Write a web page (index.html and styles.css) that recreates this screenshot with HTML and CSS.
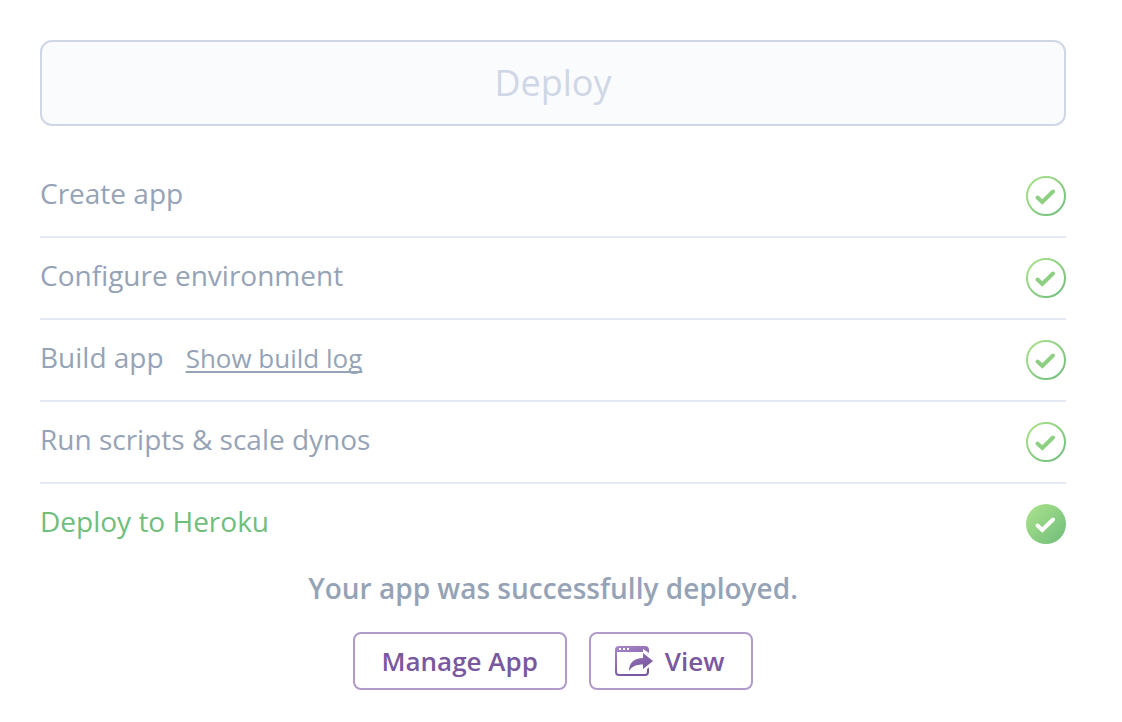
FILE: index.html
```html
<!DOCTYPE html>
<html lang="en">
<head>
<meta charset="utf-8">
<title>Deploy</title>
<link rel="stylesheet" href="styles.css">
</head>
<body>
<svg class="defs" width="0" height="0" aria-hidden="true">
  <defs>
    <linearGradient id="green" x1="0" y1="0" x2="1" y2="1">
      <stop offset="0" stop-color="#ace48c"/>
      <stop offset="1" stop-color="#6fbc7b"/>
    </linearGradient>
    <linearGradient id="purple" gradientUnits="userSpaceOnUse" x1="0" y1="0" x2="12" y2="30">
      <stop offset="0" stop-color="#a987ca"/>
      <stop offset="1" stop-color="#79589f"/>
    </linearGradient>
    <symbol id="check" viewBox="0 0 40 40">
      <circle cx="20" cy="20" r="19" fill="none" stroke="url(#green)" stroke-width="2"/>
      <path d="M11.5 21.5 16.3 26 27 15.5" fill="none" stroke="#8ed082" stroke-width="4" stroke-linecap="round" stroke-linejoin="miter"/>
    </symbol>
    <symbol id="check-full" viewBox="0 0 40 40">
      <circle cx="20" cy="20" r="20" fill="url(#green)"/>
      <path d="M11.5 21.5 16.3 26 27 15.5" fill="none" stroke="#fff" stroke-width="4" stroke-linecap="round" stroke-linejoin="miter"/>
    </symbol>
  </defs>
</svg>
<main class="page">
  <button class="deploy" type="button" disabled>Deploy</button>
  <ul class="steps">
    <li class="step"><span>Create app</span><svg class="status"><use href="#check"/></svg></li>
    <li class="step"><span>Configure environment</span><svg class="status"><use href="#check"/></svg></li>
    <li class="step"><span>Build app</span><a class="log" href="#log">Show build log</a><svg class="status"><use href="#check"/></svg></li>
    <li class="step"><span>Run scripts &amp; scale dynos</span><svg class="status"><use href="#check"/></svg></li>
    <li class="step current"><span>Deploy to Heroku</span><svg class="status"><use href="#check-full"/></svg></li>
  </ul>
  <p class="message">Your app was successfully deployed.</p>
  <div class="actions">
    <button class="action" type="button">Manage App</button>
    <button class="action view" type="button">
      <svg class="view-icon" viewBox="0 0 38 30" aria-hidden="true">
        <path fill="url(#purple)" fill-rule="evenodd" d="M4 0H30Q34 0 34 4V7L28 3V6H2V26Q2 28 4 28H30Q32 28 32 26V23L34 21.500V26Q34 30 30 30H4Q0 30 0 26V4Q0 0 4 0ZM4 2V4H6V2ZM8 2V4H10V2ZM12 2V4H14V2Z"/>
        <path fill="url(#purple)" d="M28 7 38 15 28 23V18.500C21 18.500 17 20.500 14 25C14 17 19 12 28 12Z"/>
      </svg>
      View
    </button>
  </div>
</main>
</body>
</html>
```
FILE: styles.css
```css
* {
  box-sizing: border-box;
}

body {
  margin: 0;
  background: #fff;
  color: #96a3b6;
  font-family: "Open Sans", "Noto Sans", sans-serif;
  font-size: 28px;
  line-height: 40px;
}

button {
  font-family: inherit;
}

.defs {
  position: absolute;
}

.page {
  padding: 40px 56px 32px 40px;
}

.deploy {
  display: block;
  width: 100%;
  padding: 16px;
  border: 2px solid #cfd7e6;
  border-radius: 12px;
  background: #fafbfd;
  color: #cfd7e6;
  font-size: 36px;
  font-weight: 400;
  line-height: 50px;
}

.steps {
  margin: 30px 0 0;
  padding: 0;
  list-style: none;
}

.step {
  display: flex;
  align-items: flex-start;
  gap: 22px;
  padding: 17px 0 20px;
  border-bottom: 2px solid #e3e8f3;
}

.current {
  padding-bottom: 0;
  border-bottom: 0;
  color: #6fbe7c;
}

.log {
  color: inherit;
  font-size: 26px;
  line-height: 42px;
  text-decoration-thickness: 2px;
  text-underline-offset: 3px;
  text-decoration-skip-ink: none;
}

.status {
  width: 40px;
  height: 40px;
  margin: 3px 0 0 auto;
}

.message {
  margin: 24px 0;
  font-weight: 600;
  text-align: center;
}

.actions {
  display: flex;
  justify-content: center;
  gap: 22px;
}

.action {
  display: flex;
  align-items: center;
  gap: 12px;
  padding: 8px 27px;
  border: 2px solid #b19bc9;
  border-radius: 8px;
  background: #fff;
  color: #79589f;
  font-size: 26px;
  font-weight: 600;
  line-height: 38px;
}

.view {
  padding-left: 24px;
}

.view-icon {
  width: 38px;
  height: 30px;
}
```
